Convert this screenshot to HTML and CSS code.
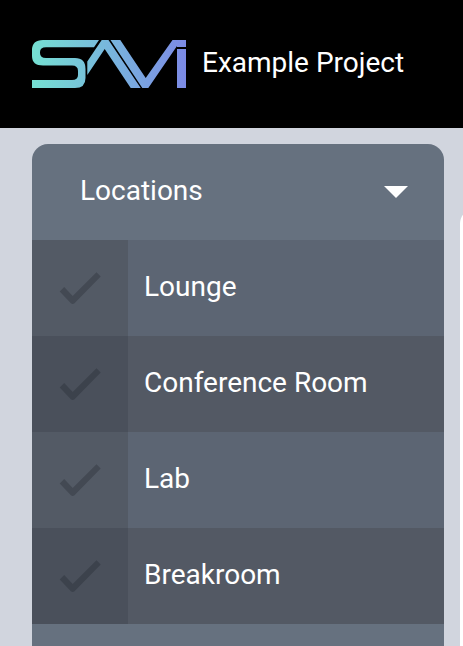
FILE: index.html
```html
<!DOCTYPE html>
<html lang="en">
<head>
<meta charset="utf-8">
<title>Example Project</title>
<link rel="stylesheet" href="styles.css">
</head>
<body>
<header class="header">
  <svg class="logo" viewBox="32 40 154 48" role="img" aria-label="SAVI">
    <defs>
      <linearGradient id="brand" gradientUnits="userSpaceOnUse" x1="32" y1="64" x2="186" y2="64">
        <stop offset="0" stop-color="#75e0d2"/>
        <stop offset="0.5" stop-color="#78b6dd"/>
        <stop offset="1" stop-color="#7c8ae5"/>
      </linearGradient>
    </defs>
    <g fill="url(#brand)">
      <path d="M99 40H43Q32 40 32 50V56Q32 65.500 43 65.500H72Q78 65.500 78 71V75Q78 80 72 80H32V88H75Q85.500 88 85.500 78V69Q85.500 58 75 58H46Q40 58 40 53V52Q40 47.300 46 47.300H94Z"/>
      <path d="M87.300 75V61.500L101.700 40H108.500L140.700 88H130.700L104.700 49Z"/>
      <path d="M110.500 40H120.300L145.700 78L172.500 40H186V47H177V46L148.300 88H142.300Z"/>
      <path d="M177 49H186V88H177Z"/>
    </g>
  </svg>
  <span class="project">Example Project</span>
</header>
<main class="page">
  <section class="locations">
    <div class="locations-head">
      <span>Locations</span>
      <svg class="caret" viewBox="0 0 24 12"><path d="M0 0H24L12 12Z"/></svg>
    </div>
    <div class="row"><div class="check"><svg viewBox="0 0 48 48"><path d="M3.700 27.500L8.200 23L16.700 32L40.500 8.300L44.700 12.600L18.500 39.300Q16.700 40.700 14.900 39.300Z"/></svg></div><span>Lounge</span></div>
    <div class="row"><div class="check"><svg viewBox="0 0 48 48"><path d="M3.700 27.500L8.200 23L16.700 32L40.500 8.300L44.700 12.600L18.500 39.300Q16.700 40.700 14.900 39.300Z"/></svg></div><span>Conference Room</span></div>
    <div class="row"><div class="check"><svg viewBox="0 0 48 48"><path d="M3.700 27.500L8.200 23L16.700 32L40.500 8.300L44.700 12.600L18.500 39.300Q16.700 40.700 14.900 39.300Z"/></svg></div><span>Lab</span></div>
    <div class="row"><div class="check"><svg viewBox="0 0 48 48"><path d="M3.700 27.500L8.200 23L16.700 32L40.500 8.300L44.700 12.600L18.500 39.300Q16.700 40.700 14.900 39.300Z"/></svg></div><span>Breakroom</span></div>
  </section>
  <section class="panel"></section>
</main>
</body>
</html>
```
FILE: styles.css
```css
* { box-sizing: border-box; }
body {
  margin: 0;
  height: 646px;
  display: flex;
  flex-direction: column;
  overflow: hidden;
  background: #d1d5de;
  color: #fff;
  font: 28px/32px Roboto, sans-serif;
}
.header {
  height: 128px;
  flex: none;
  display: flex;
  align-items: center;
  gap: 16px;
  padding: 0 32px;
  background: #000;
}
.logo { width: 154px; height: 48px; flex: none; }
.project { white-space: nowrap; margin-top: -2px; }
.page {
  flex: 1;
  display: flex;
  gap: 16px;
  padding: 16px 0 0 32px;
  overflow: hidden;
}
.locations {
  width: 412px;
  flex: none;
  background: #66717f;
  border-radius: 16px 16px 0 0;
}
.locations-head {
  height: 96px;
  display: flex;
  align-items: center;
  justify-content: space-between;
  padding: 0 36px 2px 48px;
}
.caret { width: 24px; height: 12px; fill: #fff; margin-top: 2px; }
.row {
  height: 96px;
  display: flex;
  align-items: center;
  background: #5c6573;
}
.row:nth-child(odd) { background: #535964; }
.row span { margin: -2px 0 0 16px; }
.check {
  width: 96px;
  height: 96px;
  display: flex;
  align-items: center;
  justify-content: center;
  background: #535a65;
}
.row:nth-child(odd) .check { background: #4a505b; }
.check svg { width: 48px; height: 48px; fill: #434953; }
.row:nth-child(odd) .check svg { fill: #3c424c; }
/* Only the leading edge of the content panel is in view. */
.panel {
  flex: 1;
  min-width: 0;
  margin-top: 64px;
  background: radial-gradient(circle at 16px 16px, #fff 15.500px, transparent 16.500px) 0 0 / 100% 16px no-repeat,
    linear-gradient(#fff, #fff) 0 16px no-repeat;
}
```
